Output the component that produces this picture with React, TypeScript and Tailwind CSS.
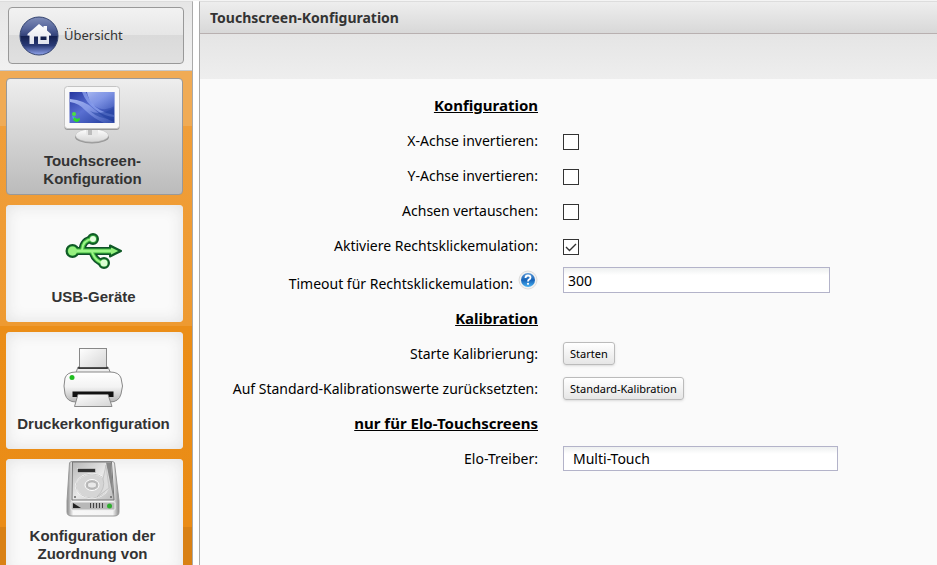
import { useState } from "react";
import type { ReactNode } from "react";

const HomeIcon = () => (
  <svg width="40" height="40" viewBox="0 0 40 40" aria-hidden="true">
    <defs>
      <linearGradient id="ball" x1="0" y1="0" x2="0" y2="1">
        <stop offset="0" stopColor="#7f8db8" />
        <stop offset="0.3" stopColor="#56659b" />
        <stop offset="0.49" stopColor="#33427a" />
        <stop offset="0.5" stopColor="#131f4e" />
        <stop offset="0.75" stopColor="#2a3a76" />
        <stop offset="1" stopColor="#93a6ee" />
      </linearGradient>
      <linearGradient id="house" x1="0" y1="0" x2="0" y2="1">
        <stop offset="0" stopColor="#fff" />
        <stop offset="1" stopColor="#e0e2ec" />
      </linearGradient>
    </defs>
    <circle cx="20" cy="20" r="19" fill="url(#ball)" stroke="#33436f" strokeWidth="1" />
    <path d="M20 8 L24.5 11.5 V10 H28 V14.5 L32 18 V19.5 H30 V28 H19 V20.5 H15 V28 H10.5 V19.5 H8.5 V18 Z" fill="url(#house)" />
    <path d="M21.5 20.5 H27.5 V24 H21.5 Z" fill="#131f4e" />
  </svg>
);

const ScreenIcon = () => (
  <svg width="60" height="60" viewBox="0 0 60 60" className="shrink-0" aria-hidden="true">
    <defs>
      <linearGradient id="wall" x1="0" y1="0" x2="1" y2="1">
        <stop offset="0" stopColor="#2536a0" />
        <stop offset="0.45" stopColor="#5a70d2" />
        <stop offset="1" stopColor="#1c3796" />
      </linearGradient>
      <linearGradient id="glow" x1="0" y1="0" x2="1" y2="1">
        <stop offset="0" stopColor="#b4c4fa" stopOpacity="0.9" />
        <stop offset="1" stopColor="#7f97ea" stopOpacity="0.2" />
      </linearGradient>
      <linearGradient id="foot" x1="0" y1="0" x2="0" y2="1">
        <stop offset="0" stopColor="#fff" />
        <stop offset="1" stopColor="#d4d4d4" />
      </linearGradient>
    </defs>
    <ellipse cx="30" cy="51" rx="17" ry="6.5" fill="#999" />
    <ellipse cx="30" cy="49.5" rx="16.5" ry="6.5" fill="url(#foot)" stroke="#bbb" strokeWidth="0.5" />
    <path d="M24 43 H36 V49 Q30 52 24 49 Z" fill="#e8e8e8" />
    <path d="M26 43 H30 V49 L26 49 Z" fill="#bdbdbd" />
    <rect x="2.5" y="2" width="55" height="42" rx="3" fill="#999" />
    <rect x="2.5" y="0.5" width="55" height="42" rx="3" fill="#f8f8f8" stroke="#c4c4c4" />
    <rect x="7.5" y="6" width="45" height="31" fill="url(#wall)" />
    <path d="M25 6 H52.5 V20 Q42 27 31 19 Q26 13 25 6 Z" fill="url(#glow)" />
    <path d="M8 13 Q22 14 32 23 Q41 32 52 36 V37 H42 Q31 32 24 25 Q17 17 8 16 Z" fill="url(#glow)" />
    <path d="M20 6 H24 Q28 18 38 24 Q45 28 52 29 V31 Q42 30 34 24 Q24 17 20 6 Z" fill="#93a8f2" opacity="0.7" />
    <path d="M28 25 Q38 30 52 22 V33 Q38 34 28 25 Z" fill="#2846a5" opacity="0.6" />
    <circle cx="12" cy="28" r="2" fill="#4ce042" />
    <path d="M10 30 L13 31 L14 34 L11 33 Z" fill="#4ca1ef" />
    <path d="M12 31 Q14 34 18 32 Q18 36 14 36 L11 34 Z" fill="#29dd28" />
  </svg>
);

const UsbIcon = () => (
  <svg width="60" height="60" viewBox="0 0 60 60" fill="none" className="shrink-0" aria-hidden="true">
    <g stroke="#0f4f2a" strokeWidth="8">
      <path d="M12 30 H48" />
      <path d="M19 29 Q20 19 29 18" strokeWidth="7" />
      <path d="M29 31 Q32 40 40 42" strokeWidth="7" />
    </g>
    <g fill="#2fa33a" stroke="#0f5a26" strokeWidth="2">
      <circle cx="9.5" cy="30" r="6" />
      <circle cx="30" cy="18" r="5" />
      <circle cx="41" cy="42" r="5" />
      <path d="M47 24.5 L58 30 L47 35.5 Z" strokeLinejoin="round" />
    </g>
    <g stroke="#3fb83c" strokeWidth="5">
      <path d="M12 30 H49" />
      <path d="M19 29 Q20 19 29 18" strokeWidth="4" />
      <path d="M29 31 Q32 40 40 42" strokeWidth="4" />
    </g>
    <g stroke="#9cf588" strokeWidth="3">
      <path d="M10 30 H49" />
      <path d="M19 29 Q20 19 29 18" strokeWidth="2" />
      <path d="M29 31 Q32 40 40 42" strokeWidth="2" />
    </g>
    <circle cx="9.5" cy="30" r="4.5" fill="#97f080" />
    <circle cx="30" cy="18" r="3" fill="#e5ffdf" />
    <circle cx="41" cy="42" r="3.5" fill="#dbffd2" />
    <path d="M48 26.500 L55 30 L48 33.500 Z" fill="#97f080" />
  </svg>
);

const PrinterIcon = () => (
  <svg width="60" height="60" viewBox="0 0 60 60" className="shrink-0" aria-hidden="true">
    <defs>
      <linearGradient id="shell" x1="0" y1="0" x2="0" y2="1">
        <stop offset="0" stopColor="#fff" />
        <stop offset="0.5" stopColor="#f3f3f3" />
        <stop offset="1" stopColor="#b5b5b5" />
      </linearGradient>
      <linearGradient id="paper" x1="0" y1="0" x2="1" y2="1">
        <stop offset="0" stopColor="#fff" />
        <stop offset="1" stopColor="#d4d4d4" />
      </linearGradient>
    </defs>
    <path d="M12.5 26 L15 19 H45 L48 26 Z" fill="#eee" stroke="#888" />
    <rect x="16.500" y="0.500" width="27" height="20" fill="url(#paper)" stroke="#888" />
    <path d="M15 20 H45" stroke="#222" strokeWidth="1.5" />
    <path d="M13 24 H47 Q56 24 58 30 Q61 38 58 46 Q56 54 47 54 H13 Q4 54 2 46 Q0 38 2 30 Q4 24 13 24 Z" fill="url(#shell)" stroke="#888" />
    <path d="M9.500 43.500 H50.500 V49 H9.500 Z" fill="#111" />
    <path d="M15 46.500 H45 L49 58.500 H11.500 Z" fill="url(#paper)" stroke="#888" />
    <circle cx="9" cy="29.500" r="2.500" fill="#20bd20" />
  </svg>
);

const DiskIcon = () => (
  <svg width="60" height="60" viewBox="-1 0 60 60" className="shrink-0" aria-hidden="true">
    <defs>
      <linearGradient id="case" x1="0" y1="0" x2="1" y2="0">
        <stop offset="0" stopColor="#888" />
        <stop offset="0.12" stopColor="#f8f8f8" />
        <stop offset="0.88" stopColor="#f3f3f3" />
        <stop offset="1" stopColor="#888" />
      </linearGradient>
      <linearGradient id="lid" x1="0" y1="0" x2="1" y2="1">
        <stop offset="0" stopColor="#b6b6b6" />
        <stop offset="0.5" stopColor="#e8e8e8" />
        <stop offset="1" stopColor="#bdbdbd" />
      </linearGradient>
    </defs>
    <path d="M6.500 4 Q7 2.500 9 2.500 H49 Q51 2.500 51.500 4 L56 42 V53 Q56 57 51 57 H9 Q4 57 4 53 V42 Z" fill="url(#case)" stroke="#999" />
    <path d="M9.500 3 H48.500 L51 41 H9 Z" fill="url(#lid)" stroke="#777" />
    <path d="M43 3.500 H48 L50.500 40 Z" fill="#888" />
    <ellipse cx="29" cy="27" rx="16" ry="12" fill="#d5d5d5" stroke="#fff" strokeWidth="1.5" />
    <ellipse cx="29" cy="27" rx="16" ry="12" stroke="#999" strokeWidth="0.5" fill="none" />
    <ellipse cx="29" cy="26" rx="7" ry="5.500" fill="#bbb" stroke="#fff" />
    <ellipse cx="29" cy="26" rx="4.500" ry="3" fill="#e9e9e9" stroke="#999" strokeWidth="0.5" />
    <path d="M43 6 L46 29 L34 38 Q43 29 40 20 Z" fill="#ddd" stroke="#aaa" strokeWidth="0.5" />
    <rect x="14.500" y="9.500" width="18" height="4" fill="#333" stroke="#eee" strokeWidth="0.5" />
    <circle cx="12" cy="38" r="1" fill="#666" />
    <circle cx="48" cy="38" r="1" fill="#666" />
    <rect x="8" y="43" width="44" height="8" rx="1" fill="#b8b8b8" stroke="#eee" />
    <path d="M10 44 L18 49 H10 Z" fill="#222" />
    <path d="M27.500 44 V49 M30.500 44 V49 M33.500 44 V49 M36.500 44 V49 M39.500 44 V49" stroke="#444" />
    <circle cx="46.500" cy="47" r="2.500" fill="#2fae2f" />
  </svg>
);

const HelpIcon = () => (
  <svg width="20" height="20" viewBox="0 0 20 20" aria-hidden="true">
    <defs>
      <linearGradient id="help" x1="0" y1="0" x2="0" y2="1">
        <stop offset="0" stopColor="#5b9ad8" />
        <stop offset="0.5" stopColor="#1663b8" />
        <stop offset="1" stopColor="#49b1f2" />
      </linearGradient>
    </defs>
    <circle cx="10" cy="10" r="9" fill="#f1f1f1" stroke="#ddd" />
    <circle cx="10" cy="10" r="7" fill="url(#help)" />
    <path d="M7.5 8 Q7.5 5.5 10 5.5 Q12.5 5.5 12.5 7.5 Q12.5 8.8 11 9.6 Q10 10.2 10 11.5" fill="none" stroke="#fff" strokeWidth="1.8" />
    <circle cx="10" cy="13.8" r="1.1" fill="#fff" />
  </svg>
);

const items = [
  {
    label: "Touchscreen-Konfiguration",
    icon: <ScreenIcon />,
    style: "justify-between border border-[#999] bg-linear-to-b from-[#eee] to-[#bbb] pt-[7px] pb-[6px] pl-5 pr-6",
  },
  {
    label: "USB-Geräte",
    icon: <UsbIcon />,
    style: "justify-between bg-[#fafafa] py-4 pl-2 pr-[10px] shadow-[inset_0_0_16px_#e0e0e0]",
  },
  {
    label: "Druckerkonfiguration",
    icon: <PrinterIcon />,
    style: "justify-between bg-[#fafafa] py-4 pl-2 pr-[10px] shadow-[inset_0_0_16px_#e0e0e0]",
  },
  {
    label: "Konfiguration der Zuordnung von",
    icon: <DiskIcon />,
    style: "gap-2 bg-[#fafafa] pl-5 pr-6 shadow-[inset_0_0_16px_#e0e0e0]",
  },
];

const Heading = ({ children }: { children: ReactNode }) => (
  <div className="grid h-[35px] grid-cols-[46%_1fr] items-center">
    <h2 className="pr-px text-right text-[15px] font-bold underline">{children}</h2>
  </div>
);

const Row = ({ id, label, children }: { id: string; label: string; children: ReactNode }) => (
  <div className="grid h-[35px] grid-cols-[46%_1fr] items-center gap-x-6">
    <label htmlFor={id} className="pr-px text-right whitespace-nowrap">
      {label}
    </label>
    <div className="flex items-center">{children}</div>
  </div>
);

const Check = ({ id, checked = false }: { id: string; checked?: boolean }) => {
  const [on, setOn] = useState(checked);
  return (
    <span className="mt-[3px] grid size-4">
      <input
        id={id}
        type="checkbox"
        checked={on}
        onChange={(e) => setOn(e.target.checked)}
        className="peer col-start-1 row-start-1 size-4 appearance-none border border-[#333] bg-white"
      />
      <svg
        viewBox="0 0 16 16"
        fill="none"
        aria-hidden="true"
        className="pointer-events-none col-start-1 row-start-1 size-4 opacity-0 peer-checked:opacity-100"
      >
        <path d="M3 8 L6.5 11.5 L13 5" stroke="#333" strokeWidth="1.4" />
      </svg>
    </span>
  );
};

export default function App() {
  const [timeout, setTimeoutValue] = useState("300");
  return (
    <div className="flex h-screen overflow-hidden border-t border-[#f4f4f4] bg-white font-['Noto_Sans',sans-serif] text-sm text-black">
      <aside className="flex w-[193px] shrink-0 flex-col border-t border-r border-t-[#ddd] border-r-[#aaa]">
        <div className="border-b border-[#c8c8c8] bg-linear-to-b from-[#e6e6e6] to-[#f1f1f1] px-2 pt-[5px] pb-[6px]">
          <button
            type="button"
            className="flex h-[57px] w-full items-center gap-[5px] rounded-[4px] border border-[#999] bg-[linear-gradient(#f2f2f2,#e6e6e6_49%,#dadada_50%,#e0e0e0)] pl-[10px] text-[13px] text-[#333]"
          >
            <HomeIcon />
            Übersicht
          </button>
        </div>
        <nav className="flex min-h-0 flex-1 flex-col gap-[10px] overflow-hidden bg-[linear-gradient(#f0ab55_55px,#f09e39_55px,#ee9a31_255px,#eb8e18_255px,#ea8c16_456px,#d98115_456px)] pt-[7px] pr-[9px] pl-[6px]">
          {items.map((item) => (
            <a
              key={item.label}
              href="#"
              className={`flex h-[117px] shrink-0 flex-col items-center rounded-[4px] ${item.style}`}
            >
              <span className="shrink-0 pr-0.5">{item.icon}</span>
              <span className="text-center font-['Liberation_Sans',sans-serif] text-[15px] leading-[18px] font-bold text-[#333]">
                {item.label}
              </span>
            </a>
          ))}
        </nav>
      </aside>
      <main className="ml-[6px] flex min-w-0 flex-1 flex-col border-t border-l border-t-[#ddd] border-l-[#aaa] bg-[#fafafa]">
        <h1 className="flex h-8 shrink-0 items-center border-b border-[#b8b0b0] bg-linear-to-b from-[#eee] to-[#d8d8d8] px-[10px] font-bold text-[#333]">
          Touchscreen-Konfiguration
        </h1>
        <div className="h-[45px] shrink-0 bg-linear-to-b from-[#e5e5e5] to-[#eee]" />
        <form className="pt-[9px]">
          <Heading>Konfiguration</Heading>
          <Row id="invert-x" label="X-Achse invertieren:">
            <Check id="invert-x" />
          </Row>
          <Row id="invert-y" label="Y-Achse invertieren:">
            <Check id="invert-y" />
          </Row>
          <Row id="swap" label="Achsen vertauschen:">
            <Check id="swap" />
          </Row>
          <Row id="right-click" label="Aktiviere Rechtsklickemulation:">
            <Check id="right-click" checked />
          </Row>
          <div className="grid h-[38px] grid-cols-[46%_1fr] items-center gap-x-6">
            <div className="flex items-start justify-end gap-[5px] pr-px">
              <label htmlFor="timeout" className="pt-1 whitespace-nowrap">
                Timeout für Rechtsklickemulation:
              </label>
              <button type="button" aria-label="Hilfe">
                <HelpIcon />
              </button>
            </div>
            <input
              id="timeout"
              type="text"
              value={timeout}
              onChange={(e) => setTimeoutValue(e.target.value)}
              className="mb-1 h-[26px] w-[267px] border border-[#b3b3c9] bg-white bg-linear-to-b from-[#eef0f0] to-white to-30% px-1"
            />
          </div>
          <Heading>Kalibration</Heading>
          <Row id="start" label="Starte Kalibrierung:">
            <button
              id="start"
              type="button"
              className="h-[23px] rounded-[3px] border border-[#bbb] bg-linear-to-b from-white to-[#e6e6e6] px-[6px] text-[11px] shadow-sm"
            >
              Starten
            </button>
          </Row>
          <Row id="defaults" label="Auf Standard-Kalibrationswerte zurücksetzten:">
            <button
              id="defaults"
              type="button"
              className="h-[23px] rounded-[3px] border border-[#bbb] bg-linear-to-b from-white to-[#e6e6e6] px-[6px] text-[11px] shadow-sm"
            >
              Standard-Kalibration
            </button>
          </Row>
          <Heading>nur für Elo-Touchscreens</Heading>
          <Row id="driver" label="Elo-Treiber:">
            <select
              id="driver"
              className="h-[25px] w-[275px] appearance-none border border-[#b3b3c9] bg-white bg-linear-to-b from-[#eef0f0] to-white to-30% px-[9px]"
            >
              <option>Multi-Touch</option>
            </select>
          </Row>
        </form>
      </main>
    </div>
  );
}
